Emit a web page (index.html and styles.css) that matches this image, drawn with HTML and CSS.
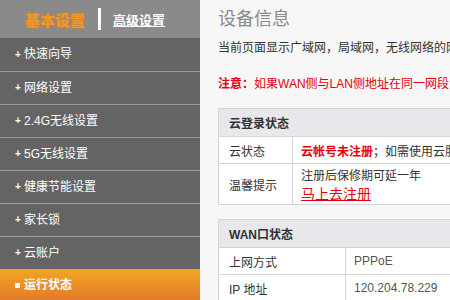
FILE: index.html
```html
<!DOCTYPE html>
<html lang="zh-CN">
<head>
  <meta charset="UTF-8">
  <title>设备信息</title>
  <link rel="stylesheet" href="styles.css">
</head>
<body>

<div class="sidebar">
  <div class="tabs">
    <span class="tab-active">基本设置</span>
    <span class="tab-bar"></span>
    <a class="tab-link" href="#">高级设置</a>
  </div>
  <ul class="menu">
    <li>快速向导</li>
    <li>网络设置</li>
    <li>2.4G无线设置</li>
    <li>5G无线设置</li>
    <li>健康节能设置</li>
    <li>家长锁</li>
    <li>云账户</li>
    <li class="current">运行状态</li>
  </ul>
</div>

<div class="main">
  <h2>设备信息</h2>
  <p class="desc">当前页面显示广域网，局域网，无线网络的网络连接状态信息。</p>
  <p class="notice"><b>注意：</b>如果WAN侧与LAN侧地址在同一网段，路由器将自动修改LAN口地址。</p>

  <!-- 云登录状态 -->
  <table class="info-table">
    <tr><th colspan="2">云登录状态</th></tr>
    <tr>
      <td class="label">云状态</td>
      <td><b class="red">云帐号未注册</b>；如需使用云服务请先注册</td>
    </tr>
    <tr>
      <td class="label">温馨提示</td>
      <td class="tip">注册后保修期可延一年<br><a class="reg-link" href="#">马上去注册</a></td>
    </tr>
  </table>

  <!-- WAN口状态 -->
  <table class="info-table">
    <tr><th colspan="2">WAN口状态</th></tr>
    <tr>
      <td class="label">上网方式</td>
      <td class="value">PPPoE</td>
    </tr>
    <tr>
      <td class="label">IP 地址</td>
      <td class="value">120.204.78.229</td>
    </tr>
  </table>
</div>

</body>
</html>
```

FILE: styles.css
```css
/* General Styling */
body {
  margin: 0;
  font-family: "Liberation Sans", "Noto Sans CJK SC", sans-serif;
  font-size: 12px;
  background-color: #f7f7f7;
  color: #333;
  display: flex;
  height: 300px;
  overflow: hidden;
}

/* Sidebar */
.sidebar {
  width: 200px;
  flex-shrink: 0;
  background-color: #646464;
}

.tabs {
  height: 38px;
  background-color: #8a8a8a;
  display: flex;
  align-items: center;
  padding-left: 25px;
}

.tab-active {
  color: #f39a1e;
  font-size: 15px;
  font-weight: bold;
  text-shadow: 0 0 3px #e0802a;
}

.tab-bar {
  width: 3px;
  height: 22px;
  background-color: #fff;
  margin: 0 12px 0 13px;
}

.tab-link {
  color: #fff;
  font-weight: bold;
  font-size: 13px;
  text-decoration: underline;
}

.menu {
  list-style: none;
  margin: 0;
  padding: 0;
}

.menu li {
  height: 32px;
  line-height: 32px;
  border-top: 1px solid #9a9a9a;
  color: #fff;
  font-size: 12px;
  padding-left: 24px;
  position: relative;
}

.menu li:first-child {
  border-top: none;
  height: 33px;
  line-height: 33px;
}

.menu li::before {
  content: "+";
  position: absolute;
  left: 15px;
  font-size: 10px;
  font-weight: bold;
}

.menu li.current {
  background: linear-gradient(#f2a624, #e3782a);
  border-top: none;
  font-weight: bold;
  height: 33px;
}

.menu li.current::before {
  content: "";
  width: 5px;
  height: 5px;
  top: 14px;
  background-color: #fff;
}

/* Main content */
.main {
  flex: 1;
  padding-left: 18px;
  overflow: hidden;
  white-space: nowrap;
}

h2 {
  margin: 6px 0 0;
  font-size: 18px;
  font-weight: normal;
  color: #8a8a8a;
  line-height: 26px;
}

.desc {
  margin: 7px 0 0;
  line-height: 18px;
}

.notice {
  margin: 18px 0 0;
  line-height: 18px;
  color: #e60012;
}

.red {
  color: #e60012;
}

.info-table {
  width: 300px;
  border-collapse: collapse;
  background-color: #fff;
  margin-top: 15px;
}

.info-table + .info-table {
  margin-top: 14px;
}

.info-table th {
  background-color: #e8e8ec;
  text-align: left;
  height: 27px;
  padding: 0 0 0 10px;
  font-size: 12px;
  border: 1px solid #d4d4d4;
}

.info-table td {
  height: 26px;
  padding: 0 0 0 8px;
  border: 1px solid #d4d4d4;
}

.info-table td.label {
  width: 116px;
  padding-left: 10px;
}

.info-table td.tip {
  height: 37px;
  padding-top: 3px;
  line-height: 18px;
}

.reg-link {
  color: #e60012;
  font-size: 14px;
}

.value {
  color: #555;
}
```
